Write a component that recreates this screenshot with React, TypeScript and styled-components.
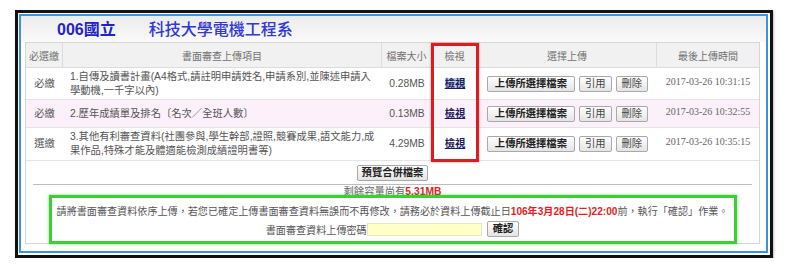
import React from "react";
import styled, { createGlobalStyle } from "styled-components";

const GlobalStyle = createGlobalStyle`
  html, body {
    margin: 0;
    padding: 0;
    background: #fff;
  }
  body {
    font-family: "Liberation Sans", "Noto Sans CJK TC", sans-serif;
  }
`;

const Page = styled.div`
  padding: 10px 0 0 15px;
`;

const Frame = styled.div`
  box-sizing: border-box;
  width: 758px;
  height: 248px;
  border: 3px solid #111;
  padding: 1px 2px 2px 1px;
  background: #fff;
  box-shadow: 1px 1px 2px rgba(0, 0, 0, 0.25);
`;

const Panel = styled.div`
  box-sizing: border-box;
  height: 100%;
  border: 2px solid #3d92e0;
  background: #fff;
`;

const TitleBar = styled.div`
  height: 26px;
  display: flex;
  align-items: center;
  gap: 33px;
  padding-left: 36px;
  padding-top: 2px;
  box-sizing: border-box;
  background: linear-gradient(#ececec, #fafafa);
  font-size: 16px;
  line-height: 1;
`;

const School = styled.span`
  color: #1f24c8;
  font-weight: bold;
`;

const Dept = styled.span`
  color: #3038d8;
  font-weight: 500;
`;

const Board = styled.div`
  position: relative;
  box-sizing: border-box;
  height: 202px;
  margin: 0 6px 0 4px;
  border: 1px solid #d6d6d6;
`;

const Grid = styled.table`
  width: 100%;
  table-layout: fixed;
  border-collapse: separate;
  border-spacing: 0;
  font-size: 10.3px;
  color: #555;
`;

const HeadCell = styled.th<{ $w: number }>`
  box-sizing: border-box;
  width: ${(p) => p.$w}px;
  height: 25px;
  padding: 0;
  background: #f1f1f1;
  font-weight: normal;
  font-size: 10px;
  color: #707070;
  border-right: 1px solid #dcdcdc;
  border-bottom: 1px solid #dcdcdc;

  &:last-child {
    border-right: none;
  }
`;

const Row = styled.tr<{ $pink: boolean }>`
  background: ${(p) => (p.$pink ? "#fcf0fb" : "#fff")};
`;

const Cell = styled.td<{ $h: number; $left?: boolean }>`
  box-sizing: border-box;
  height: ${(p) => p.$h}px;
  padding: ${(p) => (p.$left ? "0 6px 0 7px" : "0")};
  text-align: ${(p) => (p.$left ? "left" : "center")};
  vertical-align: middle;
  line-height: 14px;
  border-bottom: 1px solid #e4e4e4;
`;

const Time = styled.span`
  font-family: "Liberation Serif", serif;
  font-size: 10px;
  color: #666;
  position: relative;
  top: -2px;
`;

const ViewLink = styled.a<{ $sel?: boolean }>`
  color: #1c1c5c;
  font-weight: bold;
  text-decoration: underline;
  background: ${(p) => (p.$sel ? "#bccff0" : "transparent")};
  cursor: pointer;
`;

const Buttons = styled.div`
  display: flex;
  justify-content: center;
  gap: 4px;
`;

const Btn = styled.button<{ $bold?: boolean; $pad?: number }>`
  height: 16px;
  padding: 0 ${(p) => p.$pad ?? 5}px;
  border: 1px solid #a9a9a9;
  border-radius: 2px;
  background: linear-gradient(#fefefe, #e4e4e4);
  font-family: "Liberation Sans", "Noto Sans CJK TC", sans-serif;
  font-size: 10.3px;
  font-weight: ${(p) => (p.$bold ? "bold" : "normal")};
  line-height: 14px;
  color: ${(p) => (p.$bold ? "#222" : "#444")};
  cursor: pointer;
`;

const Footer = styled.div`
  padding-top: 4px;
  text-align: center;
  font-size: 10.3px;
  color: #666;
`;

const Rule = styled.div`
  height: 1px;
  margin: 3px 7px 0;
  background: #bdbdbd;
`;

const Capacity = styled.div`
  line-height: 12px;
  margin-top: 1px;

  b {
    color: #e41c24;
  }
`;

const Notice = styled.div`
  position: relative;
  box-sizing: border-box;
  width: 688px;
  height: 49px;
  margin: -3px auto 0;
  padding-top: 6px;
  border: 3px solid #3ccf34;
  box-shadow: 0 0 3px rgba(50, 190, 40, 0.6);
  color: #555;
  font-size: 10.1px;
  white-space: nowrap;
  text-align: center;
`;

const NoticeLine = styled.div`
  line-height: 15px;

  b {
    color: #e41c24;
  }
`;

const PassRow = styled.div`
  display: flex;
  justify-content: center;
  align-items: center;
  gap: 5px;
  margin-top: 2px;
`;

const PassInput = styled.input`
  box-sizing: border-box;
  width: 115px;
  height: 13px;
  margin: 0;
  margin-left: -5px;
  padding: 0;
  border: 1px solid #e6e6c8;
  background: #ffffc6;
`;

const Highlight = styled.div`
  position: absolute;
  top: 0;
  left: 405px;
  width: 48px;
  height: 119px;
  box-sizing: border-box;
  border: 3px solid #d81e1e;
  box-shadow: 0 0 2px rgba(200, 20, 20, 0.5);
  pointer-events: none;
`;

type Item = {
  need: string;
  item: string;
  size: string;
  time: string;
  h: number;
  pink: boolean;
  sel?: boolean;
};

const items: Item[] = [
  {
    need: "必繳",
    item: "1.自傳及讀書計畫(A4格式,請註明申請姓名,申請系別,並陳述申請入學動機,一千字以內)",
    size: "0.28MB",
    time: "2017-03-26 10:31:15",
    h: 32,
    pink: false,
    sel: true,
  },
  {
    need: "必繳",
    item: "2.歷年成績單及排名〔名次／全班人數〕",
    size: "0.13MB",
    time: "2017-03-26 10:32:55",
    h: 28,
    pink: true,
  },
  {
    need: "選繳",
    item: "3.其他有利審查資料(社團參與,學生幹部,證照,競賽成果,語文能力,成果作品,特殊才能及體適能檢測成績證明書等)",
    size: "4.29MB",
    time: "2017-03-26 10:35:15",
    h: 33,
    pink: false,
  },
];

const columns: [string, number][] = [
  ["必選繳", 37],
  ["書面審查上傳項目", 319],
  ["檔案大小", 50],
  ["檢視", 46],
  ["選擇上傳", 179],
  ["最後上傳時間", 102],
];

export default function App() {
  return (
    <Page>
      <GlobalStyle />
      <Frame>
        <Panel>
          <TitleBar>
            <School>006國立</School>
            <Dept>科技大學電機工程系</Dept>
          </TitleBar>
          <Board>
            <Grid>
              <thead>
                <tr>
                  {columns.map(([label, w]) => (
                    <HeadCell key={label} $w={w}>
                      {label}
                    </HeadCell>
                  ))}
                </tr>
              </thead>
              <tbody>
                {items.map((r) => (
                  <Row key={r.item} $pink={r.pink}>
                    <Cell $h={r.h}>{r.need}</Cell>
                    <Cell $h={r.h} $left>
                      {r.item}
                    </Cell>
                    <Cell $h={r.h}>{r.size}</Cell>
                    <Cell $h={r.h}>
                      <ViewLink $sel={r.sel}>檢視</ViewLink>
                    </Cell>
                    <Cell $h={r.h}>
                      <Buttons>
                        <Btn $bold $pad={7}>
                          上傳所選擇檔案
                        </Btn>
                        <Btn>引用</Btn>
                        <Btn>刪除</Btn>
                      </Buttons>
                    </Cell>
                    <Cell $h={r.h}>
                      <Time>{r.time}</Time>
                    </Cell>
                  </Row>
                ))}
              </tbody>
            </Grid>
            <Footer>
              <Btn $bold $pad={4}>
                預覽合併檔案
              </Btn>
              <Rule />
              <Capacity>
                剩餘容量尚有<b>5.31MB</b>
              </Capacity>
              <Notice>
                <NoticeLine>
                  請將書面審查資料依序上傳，若您已確定上傳書面審查資料無誤而不再修改，請務必於資料上傳截止日
                  <b>106年3月28日(二)22:00</b>前，執行「確認」作業。
                </NoticeLine>
                <PassRow>
                  <span>書面審查資料上傳密碼</span>
                  <PassInput type="password" />
                  <Btn $bold>確認</Btn>
                </PassRow>
              </Notice>
            </Footer>
            <Highlight />
          </Board>
        </Panel>
      </Frame>
    </Page>
  );
}
